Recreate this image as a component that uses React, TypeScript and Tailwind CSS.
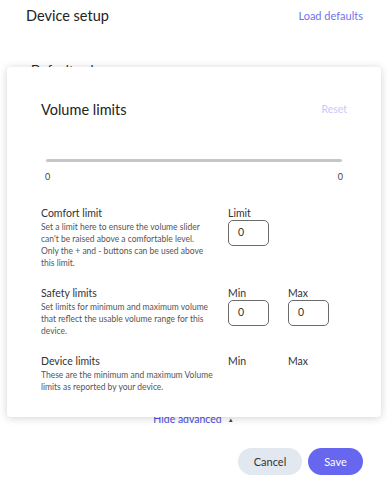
import React from "react";

const font = { fontFamily: "Lato, 'Noto Sans', sans-serif" };

function NumBox({ value }: { value: string }) {
  return (
    <div className="w-[41px] h-[26px] border border-[#6b6b6b] rounded-[5px] flex items-center pl-[9px] text-[10.5px] text-[#333]">
      {value}
    </div>
  );
}

function Row({
  title,
  desc,
  children,
}: {
  title: string;
  desc: string[];
  children: React.ReactNode;
}) {
  return (
    <div className="flex">
      <div className="w-[187px] shrink-0">
        <div className="text-[10.5px] leading-[14px] text-[#333]">{title}</div>
        <div className="text-[8.5px] leading-[12px] text-[#555] mt-[1px]">
          {desc.map((d) => (
            <div key={d}>{d}</div>
          ))}
        </div>
      </div>
      <div className="flex gap-[19px]">{children}</div>
    </div>
  );
}

export default function App() {
  return (
    <div className="relative w-full h-[500px] bg-white overflow-hidden" style={font}>
      {/* page behind the modal */}
      <div className="flex items-center justify-between pl-[26px] pr-[24px] pt-[2px] h-[30px]">
        <div className="text-[14.5px] text-[#222]">Device setup</div>
        <div className="text-[11px] text-[#7171ee]">Load defaults</div>
      </div>
      <div className="pl-[31px] mt-[31px] text-[13px] text-[#222]">Default volume</div>
      <div className="flex justify-center items-center gap-[6px] mt-[331px] text-[10.5px] text-[#4f4fe0]">
        <span>Hide advanced</span>
        <span className="text-[6px] text-[#444]">▲</span>
      </div>
      <div className="flex justify-end gap-[6px] pr-[24px] mt-[21px]">
        <button className="w-[64px] h-[27px] rounded-full bg-[#e2e8f0] text-[11px] text-[#333]">
          Cancel
        </button>
        <button className="w-[55px] h-[27px] rounded-full bg-[#6766ee] text-[11px] text-white">
          Save
        </button>
      </div>

      {/* modal card */}
      <div className="absolute left-[7px] top-[67px] w-[374px] h-[350px] bg-white rounded-[4px] shadow-[0_1px_8px_rgba(0,0,0,0.18)] px-[34px] pt-[31px]">
        <div className="flex items-center justify-between h-[24px]">
          <div className="text-[14.5px] text-[#222]">Volume limits</div>
          <div className="text-[10.5px] text-[#c9c9f8]">Reset</div>
        </div>
        <div className="px-[5px] mt-[37px]">
          <div className="h-[3px] rounded-full bg-[#c6c6c6]" />
          <div className="flex justify-between text-[9px] text-[#444] mt-[8px] -mx-[1px]">
            <span>0</span>
            <span>0</span>
          </div>
        </div>
        <div className="mt-[22px] flex flex-col gap-[17px]">
          <Row
            title="Comfort limit"
            desc={[
              "Set a limit here to ensure the volume slider",
              "can't be raised above a comfortable level.",
              "Only the + and - buttons can be used above",
              "this limit.",
            ]}
          >
            <div>
              <div className="text-[10.5px] leading-[14px] text-[#333]">Limit</div>
              <NumBox value="0" />
            </div>
          </Row>
          <Row
            title="Safety limits"
            desc={[
              "Set limits for minimum and maximum volume",
              "that reflect the usable volume range for this",
              "device.",
            ]}
          >
            <div>
              <div className="text-[10.5px] leading-[14px] text-[#333]">Min</div>
              <NumBox value="0" />
            </div>
            <div>
              <div className="text-[10.5px] leading-[14px] text-[#333]">Max</div>
              <NumBox value="0" />
            </div>
          </Row>
          <Row
            title="Device limits"
            desc={[
              "These are the minimum and maximum Volume",
              "limits as reported by your device.",
            ]}
          >
            <div className="w-[41px] text-[10.5px] leading-[14px] text-[#333]">Min</div>
            <div className="w-[41px] text-[10.5px] leading-[14px] text-[#333]">Max</div>
          </Row>
        </div>
      </div>
    </div>
  );
}
